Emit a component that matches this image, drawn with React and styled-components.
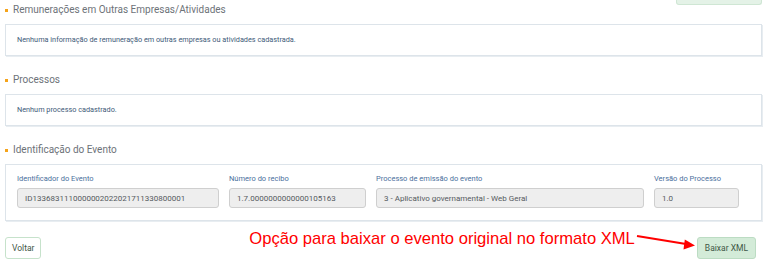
import React from "react";
import styled, { createGlobalStyle } from "styled-components";

const GlobalStyle = createGlobalStyle`
  body {
    margin: 0;
    background: #ffffff;
    font-family: Roboto, "Liberation Sans", Arial, sans-serif;
  }
`;

const Page = styled.div`
  width: 768px;
  height: 269px;
  padding: 0 6px 0 5px;
  box-sizing: border-box;
  overflow: hidden;
`;

const TopBar = styled.div`
  display: flex;
  justify-content: flex-end;
  height: 5px;
`;

const StubButton = styled.div`
  width: 84px;
  height: 4px;
  background: #e4f2e7;
  border: 1px solid #cfe6d4;
  border-top: none;
  border-radius: 0 0 3px 3px;
`;

const Title = styled.h3`
  display: flex;
  align-items: center;
  gap: 5px;
  margin: ${(p) => (p.$first ? "0" : "19px")} 0 9px;
  height: 10px;
  font-size: 10px;
  font-weight: 400;
  color: #6d7278;
  line-height: 10px;
`;

const Bullet = styled.span`
  width: 3px;
  height: 3px;
  background: #f5a31a;
`;

const Box = styled.div`
  border: 1px solid #dde4ea;
  box-shadow: 1px 1px 0 #e8edf1;
  padding: ${(p) => (p.$form ? "9px 11px 12px" : "10px 11px")};
`;

const Empty = styled.p`
  margin: 0;
  font-size: 7.3px;
  line-height: 10px;
  color: #3e5a78;
`;

const Fields = styled.div`
  display: grid;
  grid-template-columns: 202px 137px 268px 85px;
  column-gap: 10px;
`;

const Field = styled.div`
  display: flex;
  flex-direction: column;
  gap: 4px;
`;

const Label = styled.label`
  font-size: 7.5px;
  line-height: 10px;
  color: #4a6f9c;
`;

const Input = styled.div`
  height: 20px;
  box-sizing: border-box;
  display: flex;
  align-items: center;
  padding: 0 7px;
  background: #eeeeee;
  border: 1px solid #cfcfcf;
  border-radius: 3px;
  font-size: 8px;
  color: #555a60;
  white-space: nowrap;
  overflow: hidden;
`;

const ButtonRow = styled.div`
  display: flex;
  align-items: flex-start;
  margin-top: 16px;
  padding-right: 6px;
`;

const Button = styled.button`
  height: 22px;
  padding: 0 ${(p) => (p.$primary ? "7px" : "6px")};
  font-family: Roboto, "Liberation Sans", Arial, sans-serif;
  font-size: 8.5px;
  color: #3f5747;
  background: ${(p) => (p.$primary ? "#d3ebd8" : "#ffffff")};
  border: 1px solid ${(p) => (p.$primary ? "#bcdcc3" : "#c6e2cb")};
  border-radius: 3px;
`;

const Annotation = styled.div`
  display: flex;
  align-items: flex-start;
  margin-left: auto;
  margin-top: -8px;
`;

const Note = styled.span`
  font-family: "Liberation Sans", Arial, sans-serif;
  font-size: 16.6px;
  line-height: 20px;
  color: #ff0000;
  white-space: nowrap;
`;

const Arrow = styled.svg`
  margin: 2px 1px 0 1px;
`;

const fields = [
  { label: "Identificador do Evento", value: "ID1336831110000002022021711330800001" },
  { label: "Número do recibo", value: "1.7.0000000000000105163" },
  { label: "Processo de emissão do evento", value: "3 - Aplicativo governamental - Web Geral" },
  { label: "Versão do Processo", value: "1.0" },
];

function Section(props) {
  return (
    <>
      <Title $first={props.first}>
        <Bullet />
        {props.title}
      </Title>
      <Box $form={props.form}>{props.children}</Box>
    </>
  );
}

function App() {
  return (
    <Page>
      <GlobalStyle />
      <TopBar>
        <StubButton />
      </TopBar>
      <Section first title="Remunerações em Outras Empresas/Atividades">
        <Empty>
          Nenhuma informação de remuneração em outras empresas ou atividades
          cadastrada.
        </Empty>
      </Section>
      <Section title="Processos">
        <Empty>Nenhum processo cadastrado.</Empty>
      </Section>
      <Section form title="Identificação do Evento">
        <Fields>
          {fields.map((f) => (
            <Field key={f.label}>
              <Label>{f.label}</Label>
              <Input>{f.value}</Input>
            </Field>
          ))}
        </Fields>
      </Section>
      <ButtonRow>
        <Button>Voltar</Button>
        <Annotation>
          <Note>Opção para baixar o evento original no formato XML</Note>
          <Arrow width="60" height="20" viewBox="0 0 60 20">
            <line x1="1" y1="5" x2="50" y2="13" stroke="#ff0000" strokeWidth="2" />
            <polygon points="59,14.5 47.5,18.4 48.8,8.5" fill="#ff0000" />
          </Arrow>
        </Annotation>
        <Button $primary>Baixar XML</Button>
      </ButtonRow>
    </Page>
  );
}

export default App;
